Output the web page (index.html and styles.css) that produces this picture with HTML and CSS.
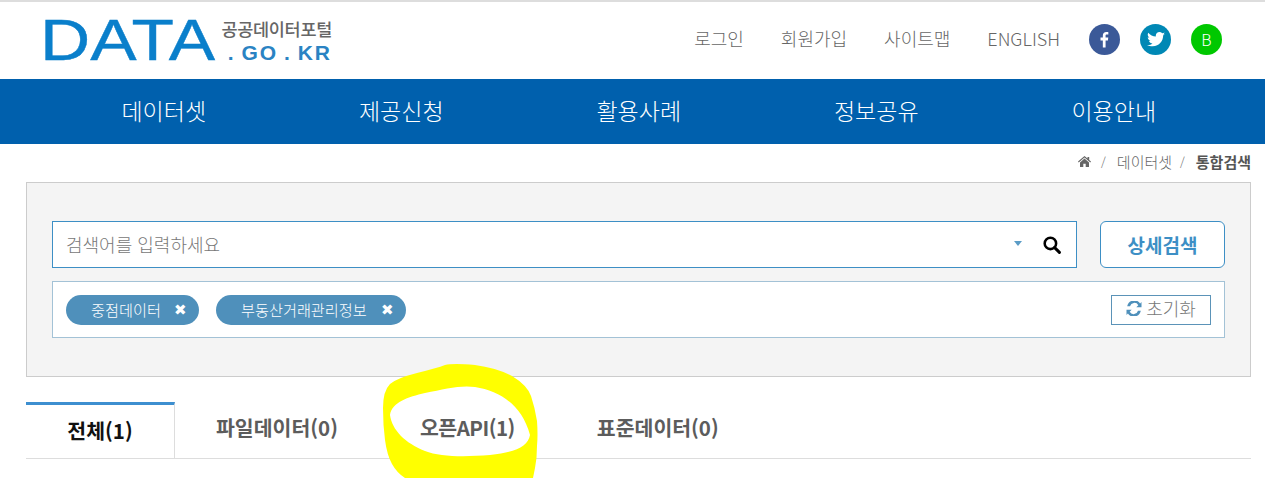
FILE: index.html
```html
<!DOCTYPE html>
<html lang="ko">
<head>
    <meta charset="UTF-8">
    <title>공공데이터포털</title>
    <link rel="stylesheet" href="styles.css">
</head>
<body>
    <!-- Header -->
    <header class="top">
        <a class="logo">
            <span class="logo-data">DATA</span>
            <span class="logo-side">
                <span class="logo-kr">공공데이터포털</span>
                <span class="logo-go">. GO . KR</span>
            </span>
        </a>
        <div class="util">
            <a>로그인</a>
            <a>회원가입</a>
            <a>사이트맵</a>
            <a>ENGLISH</a>
            <div class="social">
                <span class="sns fb">
                    <svg width="10" height="17" viewBox="0 0 12 19"><path fill="#fff" d="M3.4 19v-8.4H.6V7.2h2.8V4.8C3.4 2 5 .6 7.5.6c1.2 0 2.2.1 2.5.1v2.900H8.3c-1.3 0-1.600.6-1.600 1.500v2.100h3.200l-.4 3.400H6.700V19z"/></svg>
                </span>
                <span class="sns tw">
                    <svg width="18" height="15" viewBox="0 0 24 20"><path fill="#fff" d="M24 2.400c-.9.400-1.800.7-2.800.8 1-.6 1.800-1.600 2.200-2.700-1 .6-2 1-3.100 1.200C19.300.7 18 .1 16.600.1c-2.700 0-4.900 2.200-4.900 4.900 0 .4 0 .8.100 1.100C7.700 5.900 4.100 4 1.700.9c-.4.700-.7 1.600-.7 2.500 0 1.700.9 3.200 2.200 4.100-.8 0-1.600-.2-2.200-.6v.1c0 2.400 1.700 4.400 3.900 4.800-.4.100-.8.200-1.300.2-.3 0-.6 0-.9-.1.600 2 2.400 3.400 4.600 3.400-1.700 1.300-3.800 2.100-6.100 2.100-.4 0-.8 0-1.200-.1C2.200 18.300 4.800 19.100 7.500 19.100c9.100 0 14-7.500 14-14v-.6c1-.7 1.800-1.500 2.500-2.100z"/></svg>
                </span>
                <span class="sns blog">B</span>
            </div>
        </div>
    </header>

    <nav class="gnb">
        <a>데이터셋</a>
        <a>제공신청</a>
        <a>활용사례</a>
        <a>정보공유</a>
        <a>이용안내</a>
    </nav>

    <div class="crumb">
        <svg class="home" width="13" height="11" viewBox="0 0 13 11"><path fill="#666" d="M6.500 0 9.500 2.600V1h1.700v3l1.800 1.600-.7.800-5.800-5-5.800 5-.7-.8zM2 6.500 6.500 2.600 11 6.500V11H7.700V7.800H5.300V11H2z"/></svg>
        <span class="sep">/</span>
        <span>데이터셋</span>
        <span class="sep">/</span>
        <b>통합검색</b>
    </div>

    <!-- Search -->
    <section class="search-box">
        <div class="search-row">
            <div class="search-input">
                <span class="placeholder">검색어를 입력하세요</span>
                <span class="caret"></span>
                <svg class="glass" width="18" height="18" viewBox="0.500 0.500 17 17"><circle cx="7.500" cy="7.500" r="5.400" fill="none" stroke="#000" stroke-width="2.400"/><path d="M11.500 11.500 16 16" stroke="#000" stroke-width="2.800" stroke-linecap="round"/></svg>
            </div>
            <button class="detail-btn">상세검색</button>
        </div>
        <div class="tag-row">
            <span class="tag">중점데이터<i>✖</i></span>
            <span class="tag tag-long">부동산거래관리정보<i>✖</i></span>
            <button class="reset-btn">
                <svg width="16" height="15" viewBox="0 0 16 15"><path fill="#4f90bb" d="M15.500 1v5.200h-5.200l2-2A4.500 4.500 0 0 0 4 5.200H1.200A7.200 7.200 0 0 1 14.100 2.400zM.5 14V8.800h5.200l-2 2A4.500 4.500 0 0 0 12 9.800h2.800A7.200 7.200 0 0 1 1.900 12.600z"/></svg>
                초기화
            </button>
        </div>
    </section>

    <!-- Tabs -->
    <ul class="tabs">
        <li class="on">전체(1)</li>
        <li>파일데이터(0)</li>
        <li class="narrow">오픈API(1)</li>
        <li>표준데이터(0)</li>
    </ul>

    <!-- highlighter mark drawn over the page -->
    <svg class="marker" width="1265" height="478" viewBox="0 0 1265 478">
        <path fill="#ffff00" fill-rule="evenodd" d="M390 384Q397 378 417 373Q437 368 445 365Q453 363 475 365Q497 368 512 376Q527 385 531 396Q535 408 537 421Q538 435 537 446Q537 458 535 468L533 478L405 478Q397 473 392 464Q387 455 385 440Q383 425 383 408Q383 391 390 384zM390 415C392 402 408 397 425 393C445 389 460 385 475 387C500 391 522 405 530 435C528 447 515 452 490 455C465 457 440 457 425 451C405 443 392 430 390 415z"/>
    </svg>
</body>
</html>
```

FILE: styles.css
```css
* {
    box-sizing: border-box;
}
html, body {
    height: 478px;
    overflow: hidden;
}
body {
    margin: 0;
    position: relative;
    font-family: "Noto Sans CJK KR", "Noto Sans", sans-serif;
    color: #555;
    background-color: #fff;
}
.top {
    height: 79px;
    border-top: 2px solid #ddd;
    display: flex;
    justify-content: space-between;
    align-items: center;
    padding: 0 43px 3px 40px;
}
.logo {
    display: flex;
    align-items: center;
    gap: 8px;
}
.logo-data {
    font-family: "Liberation Sans", sans-serif;
    font-size: 57px;
    line-height: 40px;
    margin-top: 2px;
    color: #0a7fcb;
    -webkit-text-stroke: 0.4px #0a7fcb;
    width: 170px;
    transform: scaleX(1.22);
    transform-origin: left center;
}
.logo-side {
    display: flex;
    flex-direction: column;
    align-items: flex-end;
    width: 114px;
    margin-top: 4px;
}
.logo-kr {
    font-size: 17.500px;
    line-height: 24px;
    font-weight: 500;
    color: #666;
    letter-spacing: -0.3px;
}
.logo-go {
    font-family: "Liberation Sans", sans-serif;
    font-size: 21px;
    line-height: 24px;
    font-weight: 700;
    letter-spacing: 2px;
    word-spacing: -2px;
    color: #2a83c3;
}
.util {
    display: flex;
    align-items: center;
    gap: 37px;
    font-size: 18px;
    font-weight: 300;
    color: #666;
}
.util a {
    margin-top: -2px;
}
.social {
    display: flex;
    gap: 20px;
    margin-left: -8px;
}
.sns {
    width: 31px;
    height: 31px;
    border-radius: 50%;
    display: flex;
    align-items: center;
    justify-content: center;
    color: #fff;
}
.sns.fb { background-color: #3b5998; }
.sns.tw { background-color: #0088b5; }
.sns.blog { background-color: #00c800; font-size: 16px; font-weight: 300; }

.gnb {
    height: 65px;
    background-color: #0060ad;
    display: flex;
    align-items: center;
    padding: 0 0 3px 45px;
    font-size: 23px;
    font-weight: 300;
    color: #fff;
}
.gnb a {
    width: 237.500px;
    text-align: center;
}
.crumb {
    height: 38px;
    display: flex;
    justify-content: flex-end;
    align-items: center;
    gap: 6px;
    padding: 0 14px 3px 0;
    font-size: 15px;
    font-weight: 300;
    color: #666;
}
.crumb b {
    font-weight: 700;
    color: #555;
}
.home {
    margin-right: 2px;
}
.sep {
    font-size: 12px;
    margin: 0 5px 0 2px;
}
.search-box {
    margin: 0 14px 0 26px;
    height: 195px;
    padding: 38px 25px 0;
    background-color: #f4f4f4;
    border: 1px solid #ccc;
}
.search-row {
    display: flex;
    gap: 23px;
}
.search-input {
    flex: 1;
    height: 47px;
    background-color: #fff;
    border: 1px solid #3d8fc5;
    display: flex;
    align-items: center;
    padding: 0 15px 2px 13px;
    font-size: 18px;
    font-weight: 300;
    color: #777;
}
.placeholder {
    flex: 1;
}
.caret {
    width: 0;
    height: 0;
    border: 4.500px solid transparent;
    border-top: 5px solid #5b9cc6;
    border-bottom: 0;
    margin-right: 21px;
}
.glass {
    margin-top: 2px;
}
.detail-btn {
    width: 125px;
    height: 47px;
    background-color: #fff;
    border: 1px solid #3d8fc5;
    border-radius: 6px;
    font-family: inherit;
    font-size: 19px;
    font-weight: 700;
    color: #3d8fc5;
}
.tag-row {
    margin-top: 13px;
    height: 57px;
    background-color: #fff;
    border: 1px solid #a3c2d6;
    display: flex;
    align-items: center;
    gap: 17px;
    padding: 0 13px;
}
.tag {
    height: 30px;
    width: 133px;
    border-radius: 15px;
    background-color: #4f90bb;
    color: #fff;
    font-size: 15.200px;
    font-weight: 300;
    display: flex;
    align-items: center;
    padding: 0 0 2px 25px;
}
.tag-long {
    width: 190px;
}
.tag i {
    font-style: normal;
    font-size: 15px;
    font-family: "DejaVu Sans", sans-serif;
    margin: 3px 12px 0 auto;
}
.reset-btn {
    margin-left: auto;
    width: 100px;
    height: 30px;
    background-color: #fff;
    border: 1px solid #5b93b8;
    font-family: inherit;
    font-size: 18px;
    font-weight: 300;
    color: #777;
    display: flex;
    align-items: center;
    justify-content: center;
    gap: 4px;
    padding: 0 0 3px;
}
.tabs {
    list-style: none;
    margin: 25px 14px 0 26px;
    padding: 0;
    height: 57px;
    display: flex;
    border-bottom: 1px solid #ddd;
    font-size: 20.500px;
    font-weight: 700;
    color: #5c5c5c;
}
.tabs li {
    padding: 0 41px 6px;
    display: flex;
    align-items: center;
}
.tabs li.narrow {
    letter-spacing: -0.5px;
}
.tabs li.on {
    width: 149px;
    justify-content: center;
    border-top: 3px solid #3d8fd0;
    border-right: 1px solid #ddd;
    padding: 0 0 5px;
    color: #111;
    height: 57px;
}
.marker {
    position: absolute;
    left: 0;
    top: 0;
    pointer-events: none;
}
```
